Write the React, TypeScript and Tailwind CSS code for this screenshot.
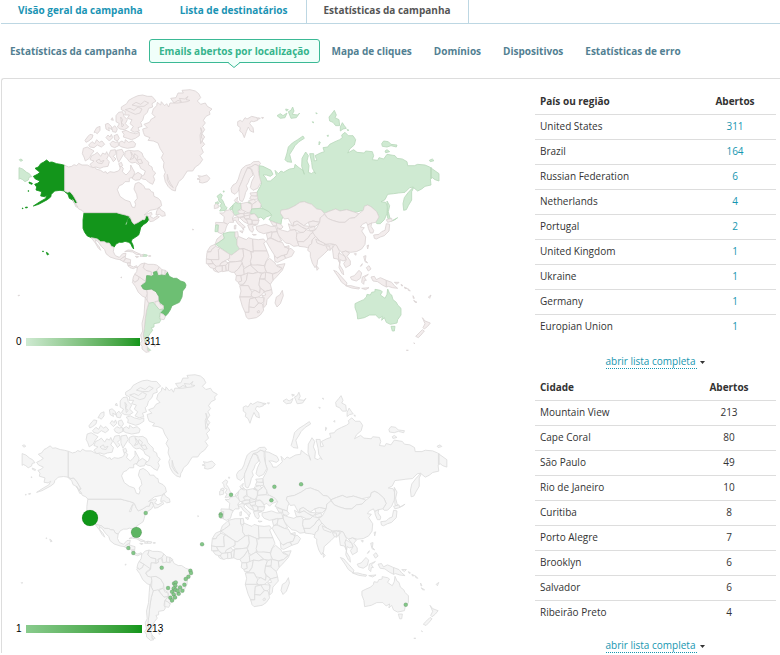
import React from 'react'
import clsx from 'clsx'

type Region = { id: string; points: string[] }
type Row = { name: string; opened: number }

// map units: 3 per pixel, eastern half is shifted by 555
const west: Region[] = [
  {
    id: 'RU-W',
    points: [
      '27,248 38,252 50,262 58,266 65,275 57,277 55,285 45,290 38,284 30,280 27,283',
      '28,224 33,222 38,226 32,229',
    ],
  },
  {
    id: 'US',
    points: [
      '164,241 152,238 140,236 126,231 118,232 110,225 100,232 92,236 85,246 75,250 82,256 90,262 82,268 70,274 76,282 90,288 84,294 74,298 80,306 78,315 95,320 92,333 104,335 112,330 106,341 90,350 70,363 86,358 112,344 122,336 124,328 134,318 150,316 164,318 172,322 180,320 190,332 196,342 202,353 194,354 186,344 178,340 174,328 164,320',
      '57,291 67,295 66,298 58,295',
      '54,317 56,317 56,319 54,319',
      '37,369 39,369 39,371 37,371',
      '46,367 52,366 52,368 47,369',
      '222,383 320,383 330,386 346,390 358,394 352,404 345,420 350,420 354,402 361,398 366,410 372,418 385,412 397,404 404,404 408,392 414,393 417,402 411,412 400,419 392,428 389,441 386,450 376,457 366,463 364,470 369,480 371,492 367,487 362,476 356,472 345,469 338,472 328,472 318,477 312,487 304,484 298,474 290,474 283,470 272,470 262,462 244,458 232,453 224,442 219,430 219,405',
      '109,502 112,503 116,508 112,510',
      '98,498 100,498 100,500 98,500',
    ],
  },
  {
    id: 'CA',
    points: [
      '164,241 176,246 185,244 192,239 200,242 206,235 216,240 232,240 243,246 254,246 258,252 272,256 280,262 288,260 291,266 300,260 312,262 325,258 330,252 330,240 340,250 337,260 348,270 356,262 362,254 362,240 374,262 370,276 358,280 358,290 345,290 338,298 328,302 322,314 330,334 345,345 360,350 366,366 374,368 377,358 374,350 382,340 380,328 372,312 376,296 386,292 396,298 402,304 406,312 418,312 424,320 430,322 432,334 445,340 452,348 455,362 440,372 420,376 402,390 412,386 424,382 426,388 420,394 430,400 444,392 448,396 430,408 420,410 414,393 408,392 404,404 397,404 385,412 372,418 366,410 361,398 358,394 346,390 330,386 320,383 222,383 216,376 206,372 196,356 202,353 190,332 180,320 172,322 164,318',
      '440,378 448,366 452,374 464,382 466,392 456,394 448,388 438,390',
      '345,200 356,196 372,198 385,197 396,204 400,216 408,224 416,232 416,240 426,246 428,256 437,264 430,274 434,284 428,298 416,292 408,284 398,282 390,276 402,270 406,258 392,250 388,240 376,232 366,234 358,230 352,222 344,214',
      '362,200 366,214 360,224 370,220 374,206 384,214 380,226 392,222 398,234 388,236',
      '220,190 232,186 242,192 252,198 244,208 238,220 226,228 222,216 217,206',
      '245,212 254,208 262,202 272,214 278,204 286,208 290,200 295,212 290,222 298,230 294,244 280,246 270,250 258,246 248,248 240,238 252,228 240,224',
      '258,228 268,222 272,230 282,226 276,236 264,234',
      '302,196 316,194 318,206 310,214 318,222 310,230 304,220 296,210',
      '320,196 336,193 342,206 332,222 326,232 320,216',
      '326,236 334,232 338,242 330,246',
      '372,270 384,262 396,270 390,284 376,286 366,280',
      '334,74 334,66 350,56 356,46 370,38 384,32 398,30 412,34 426,34 438,48 426,56 428,66 416,70 412,82 402,92 398,106 392,112 396,124 384,128 388,138 374,142 362,136 370,124 360,116 366,104 352,100 358,90 344,90 346,80',
      '346,74 360,70 372,76 384,66 396,72 390,84 376,88 362,82',
      '366,60 378,52 392,58 404,48 416,54 402,64 384,64',
      '318,92 326,82 338,80 342,94 352,104 346,116 356,126 344,134 330,132 322,126 328,116 318,110',
      '332,96 338,104 334,114 342,120 336,126',
      '336,140 348,136 360,142 376,146 388,142 388,152 376,160 364,164 352,160 340,156 342,148',
      '328,172 336,168 344,174 346,164 356,172 368,168 377,176 374,186 352,190 336,186 328,182',
      '225,166 234,154 240,148 249,150 246,160 236,168 228,172',
      '236,180 246,170 254,176 260,164 268,172 276,168 284,178 274,186 262,180 252,188 240,186',
      '252,142 260,128 270,124 270,136 262,146 256,142',
      '286,118 294,115 304,124 306,134 296,128 298,138 288,132',
      '288,158 294,150 300,156 304,148 308,158 298,168',
      '306,130 314,122 322,132 318,142 308,140',
      '300,176 308,168 316,172 324,170 326,182 314,188 304,184',
      '312,152 322,148 328,160 322,168 314,164',
      '303,104 307,98 310,106',
      '188,344 194,354 204,366 198,366',
    ],
  },
  {
    id: 'GL',
    points: [
      '398,132 412,128 402,118 418,112 424,102 436,96 426,86 430,72 440,62 442,52 452,60 454,50 464,62 470,56 476,66 480,54 492,54 482,40 498,38 504,24 520,24 516,16 540,14 556,18 566,26 572,38 562,48 572,58 586,54 592,64 606,72 598,80 600,88 588,94 580,106 586,114 578,124 584,134 576,146 584,156 576,168 584,178 574,188 580,202 570,212 578,224 568,238 556,246 548,258 532,258 524,270 518,280 506,290 502,300 498,306 496,318 484,314 474,304 466,290 462,272 466,262 460,246 462,232 454,218 460,206 450,190 444,174 430,168 414,166 420,158 404,152 400,142',
      '492,54 504,46 514,50 508,40 524,42 534,34 528,44 540,46 532,50 516,52 504,54',
      '570,150 574,140 572,128 576,140 574,156 578,164 572,176',
      '472,268 476,284 482,296 490,308 480,300 472,286',
    ],
  },
  { id: 'IS', points: ['561,282 570,278 564,272 576,274 590,270 600,280 592,290 578,294 568,292 570,284'] },
  {
    id: 'MX',
    points: [
      '244,458 262,462 272,470 283,470 290,474 298,474 304,484 312,487 310,500 316,512 328,517 338,506 348,505 346,514 338,518 336,524 330,524 318,522 300,516 288,506 284,494 274,484 264,470 256,464 258,474 268,486 272,496 264,488 256,474 248,464',
    ],
  },
  {
    id: 'CAM',
    points: [
      '330,524 338,518 346,514 346,522 340,530',
      '340,530 348,520 362,524 361,534 352,534',
      '352,534 361,534 360,543 354,542',
      '354,542 360,541 370,546 380,542 384,550 378,547 370,551 360,548',
    ],
  },
  { id: 'CU', points: ['344,500 354,495 366,496 378,502 392,508 380,509 368,501 354,499', '376,514 386,515 380,518'] },
  { id: 'DO', points: ['400,508 412,510 410,514 398,514'] },
  { id: 'HT', points: ['392,510 400,508 398,514 390,514', '416,512 422,512 422,514 416,514'] },
  { id: 'CO', points: ['382,548 392,537 404,534 400,548 408,556 424,560 424,572 410,572 408,590 395,584 388,576 374,568 380,560'] },
  { id: 'VE', points: ['404,534 414,538 430,538 440,540 448,546 442,556 430,562 432,570 424,574 424,560 408,556 400,548'] },
  { id: 'GY', points: ['448,546 456,554 455,570 445,572 442,556', '456,554 466,556 465,571 455,570', '466,556 474,562 470,571 465,571'] },
  { id: 'EC', points: ['374,568 388,576 384,586 374,592 368,586 370,576'] },
  { id: 'PE', points: ['388,576 408,590 396,598 394,604 400,612 410,612 412,625 408,638 398,634 385,622 376,604 367,592 370,586 374,592 384,586'] },
  { id: 'BO', points: ['410,612 424,612 438,620 447,635 445,648 434,650 430,654 416,655 411,645 412,625'] },
  {
    id: 'BR',
    points: [
      '410,572 416,572 424,574 432,570 430,562 440,559 444,572 455,570 466,572 472,562 478,574 490,580 500,580 512,588 524,592 528,600 526,608 518,618 516,636 508,652 495,658 486,662 480,676 472,688 466,693 460,688 450,684 462,672 460,660 448,652 447,635 438,620 424,612 408,614 400,612 394,602 408,592',
    ],
  },
  { id: 'PY', points: ['434,652 445,648 448,652 450,658 460,662 460,672 448,674 436,660'] },
  { id: 'UY', points: ['450,684 460,688 466,695 462,704 450,702'] },
  { id: 'AR', points: ['416,655 430,652 436,660 448,674 460,672 450,684 448,698 452,706 448,713 432,716 432,726 424,728 428,736 420,746 414,756 416,764 410,772 404,770 400,750 403,730 406,700 410,675', '412,786 422,796 412,796'] },
  { id: 'CL', points: ['406,636 412,648 416,655 410,675 406,700 403,730 400,750 404,770 412,784 412,796 418,800 408,802 396,792 396,784 390,776 396,768 392,750 398,738 396,715 402,690 404,660'] },
  { id: 'FK', points: ['432,780 438,782 434,785', '333,576 336,577 333,579', '24,631 29,631 26,633', '548,432 551,434 548,435'] },
]

const east: Region[] = [
  {
    id: 'SJ',
    points: [
      '128,110 136,106 142,110 150,98 156,102 170,94 186,98 188,106 176,110 168,108 164,116 174,128 176,142 166,138 160,126 154,140 148,158 142,144 134,138 136,128 128,122',
      '188,98 196,100 190,103',
      '200,97 206,98 202,101',
    ],
  },
  {
    id: 'RU',
    points: [
      '192,242 204,244 216,250 228,256 234,268 226,274 214,270 204,270 212,278 216,288 226,288 236,280 244,272 240,256 250,266 258,258 266,262 276,256 284,252 298,250 300,238 312,248 324,256 328,268 320,244 321,220 332,201 340,212 336,228 342,242 340,262 350,266 356,260 362,266 352,250 350,232 344,206 356,206 358,228 366,226 360,212 376,204 388,200 384,188 398,186 404,178 420,170 434,164 442,158 440,150 450,142 460,152 474,152 482,164 478,180 464,192 458,204 476,194 486,202 508,204 512,198 532,200 536,212 532,224 548,226 552,218 566,222 576,208 600,212 606,220 622,222 636,230 638,242 658,242 668,238 690,240 704,246 732,266 732,288 720,284 712,278 706,282 708,300 690,304 680,312 668,318 656,308 650,320 650,345 640,362 634,374 626,376 624,356 628,338 640,322 655,306 644,308 630,322 610,324 596,326 578,328 570,344 558,350 572,352 578,364 576,386 568,404 556,416 546,416 542,412 552,396 545,380 528,365 518,360 508,364 505,376 480,382 455,374 435,378 422,372 405,378 388,385 378,374 365,372 350,358 340,355 328,350 315,352 300,362 280,372 258,376 256,384 264,396 260,404 258,418 240,412 222,404 230,392 218,378 202,370 196,356 188,340 186,322 196,304 200,294 194,280',
      '270,224 276,204 280,186 292,174 308,164 324,153 328,160 312,170 300,182 292,196 284,208 290,232 276,230',
      '246,92 256,86 264,92 276,84 270,98 256,100',
      '280,80 288,76 293,66 297,78 292,88 308,90 314,84 304,98 288,100',
      '272,72 280,74 274,78',
      '402,96 412,84 418,76 424,90 420,98 432,104 434,122 422,122 414,112 404,108',
      '436,126 442,113 448,122 454,130 444,132 436,138',
      '456,134 460,134 460,138',
      '560,176 566,168 580,170 588,178 606,180 604,186 588,182 576,186 562,184',
      '570,198 576,194 584,200 572,203',
      '703,226 712,222 717,227 706,230',
      '576,348 584,362 580,380 584,396 588,404 578,400',
      '590,408 608,398 600,404',
      '158,352 168,350 168,357',
      '372,170 376,172 372,180',
      '396,152 400,150 399,155',
      '362,84 366,84 366,87',
      '352,110 357,112 354,114',
      '707,248 709,248 709,280 707,280',
    ],
  },
  { id: 'NO', points: ['110,322 108,310 114,300 124,294 130,282 134,268 140,252 152,242 166,238 176,230 192,229 197,236 190,242 180,238 168,246 158,248 150,265 140,290 132,310 130,318 120,328'] },
  { id: 'SE', points: ['132,326 132,308 140,290 150,265 158,248 168,252 174,270 164,280 160,292 154,302 158,312 152,322 148,338 142,350 134,346'] },
  { id: 'FI', points: ['158,248 168,246 180,238 190,242 190,256 192,270 198,292 188,310 174,316 166,308 170,290 178,274 170,252'] },
  { id: 'DK', points: ['118,346 128,336 126,346 132,352 122,352'] },
  { id: 'GB', points: ['70,340 66,334 76,326 82,330 78,340 84,348 90,362 96,368 92,376 74,378 80,368 74,364 80,354 72,350', '84,318 88,318 86,322', '60,354 68,350 72,356 66,358'] },
  { id: 'IE', points: ['58,360 64,356 70,360 70,368 58,371'] },
  { id: 'NL', points: ['104,370 114,360 112,372 106,375'] },
  { id: 'DE', points: ['115,358 122,352 130,356 137,354 139,370 130,376 136,386 122,391 116,388 112,372'] },
  { id: 'FR', points: ['74,384 86,384 90,378 104,374 112,380 118,390 112,398 116,412 104,412 98,418 86,412 88,395'] },
  { id: 'ES', points: ['62,412 86,413 98,418 94,426 90,440 78,446 69,442 70,420 62,419'] },
  { id: 'PT', points: ['62,420 70,420 68,440 60,440'] },
  { id: 'IT', points: ['113,400 124,396 132,398 130,406 140,416 151,426 146,428 146,436 140,426 128,416 122,406 114,406', '134,438 144,438 142,444', '118,422 123,420 122,432 118,432'] },
  { id: 'PL', points: ['138,356 156,352 170,358 170,374 162,384 150,380 140,376'] },
  { id: 'LT', points: ['165,324 186,322 186,333 170,334', '164,342 168,332 188,334 188,342 176,344', '160,348 176,343 184,350 172,358'] },
  { id: 'BY', points: ['172,358 184,350 188,344 198,358 196,370 170,372'] },
  { id: 'UA', points: ['166,386 170,372 196,370 206,372 222,380 230,390 214,396 206,404 198,396 188,400 186,392 178,386'] },
  { id: 'CZ', points: ['128,378 140,374 152,380 144,386 134,386', '122,391 136,386 148,386 146,394 132,397', '146,386 164,384 166,390 150,394'] },
  { id: 'RO', points: ['164,390 178,386 188,398 192,406 172,406 164,400'] },
  { id: 'HU', points: ['146,394 164,390 164,400 150,402'] },
  { id: 'RS', points: ['134,398 148,396 150,402 160,410 158,416 146,410', '154,402 170,404 172,416 160,418'] },
  { id: 'BG', points: ['172,406 192,406 188,418 172,418'] },
  { id: 'GR', points: ['158,420 172,418 184,420 172,424 176,434 172,442 164,436', '172,448 184,449 176,451'] },
  { id: 'TR', points: ['184,424 196,422 212,418 228,424 242,424 246,440 222,442 206,446 190,440 184,432'] },
  { id: 'GE', points: ['226,408 244,414 246,422 234,422', '244,414 258,418 264,426 258,432 246,428'] },
  { id: 'KZ', points: ['258,376 280,372 300,362 315,352 328,350 340,355 350,358 365,372 378,374 388,385 386,396 376,398 374,412 354,408 340,412 326,422 306,408 296,412 294,424 286,412 280,400 268,402 264,396 256,384'] },
  { id: 'UZ', points: ['296,412 306,408 326,422 344,424 340,430 334,432 320,426 308,418 296,424'] },
  { id: 'TM', points: ['280,416 294,424 308,418 320,426 334,434 326,442 316,442 300,434 286,436'] },
  { id: 'KG', points: ['340,412 354,408 374,412 362,424 344,424', '340,430 358,424 362,434 346,438'] },
  { id: 'IR', points: ['246,430 262,436 278,440 286,436 300,434 306,444 304,460 312,482 296,484 284,476 272,474 260,462 248,448'] },
  { id: 'AF', points: ['306,444 326,442 334,434 346,438 358,438 346,448 340,458 326,470 308,470 304,458'] },
  { id: 'PK', points: ['308,470 326,470 340,458 346,448 358,440 362,454 352,464 350,476 342,482 344,490 330,486 312,484'] },
  { id: 'MN', points: ['388,385 405,378 422,372 435,378 455,374 480,382 492,386 480,398 464,400 450,412 432,412 412,406 398,400'] },
  { id: 'CN', points: ['388,388 398,400 412,406 432,412 450,412 464,400 480,398 492,386 505,376 508,364 518,360 528,365 545,380 552,396 542,412 530,414 518,420 514,412 502,418 496,426 508,428 500,438 512,456 510,478 500,492 484,500 466,502 452,498 440,502 430,492 424,480 408,476 390,478 374,468 362,456 352,440 362,434 374,412 376,398', '478,506 484,506 482,511'] },
  { id: 'KR', points: ['518,420 530,414 528,424 536,436 534,444 526,444 520,430'] },
  { id: 'JP', points: ['536,450 552,448 560,440 570,436 574,416 584,418 582,438 568,452 556,456 544,462 538,460', '574,404 590,400 592,408 578,412', '516,482 521,480 518,492'] },
  { id: 'IN', points: ['342,482 350,476 352,464 362,454 374,468 390,478 404,480 416,478 410,492 400,494 388,506 368,524 366,540 360,548 352,534 346,514 346,502 338,496'] },
  { id: 'BD', points: ['392,482 404,484 406,496 398,494'] },
  { id: 'LK', points: ['364,542 371,550 366,556'] },
  { id: 'NP', points: ['362,462 390,476 388,482 366,474'] },
  { id: 'MM', points: ['412,490 420,478 426,484 434,500 430,512 434,534 428,522 416,520'] },
  { id: 'TH', points: ['432,504 440,508 450,514 454,524 444,528 436,524 434,540 444,556 446,570 440,564 432,548 434,534 430,512'] },
  { id: 'VN', points: ['440,502 452,498 464,504 456,514 466,528 466,540 452,548 446,536 454,524 450,514'] },
  { id: 'PH', points: ['506,514 513,512 511,526 518,534 510,530', '514,548 522,542 528,552 520,558', '496,544 502,536 500,542'] },
  { id: 'ID', points: ['416,556 426,560 440,576 456,594 454,602 440,592 430,576', '452,602 468,602 482,606 494,608 492,612 470,609', '466,576 478,572 492,556 500,564 496,580 484,588 470,584', '502,576 520,568 508,578 514,586 508,586 506,598 500,592', '500,610 522,608 512,614', '528,576 538,574 544,584 556,578 574,586 574,606 562,600 548,590 534,588'] },
  { id: 'PG', points: ['574,586 590,592 598,602 608,610 592,608 580,604 574,606', '598,592 612,592 606,598'] },
  { id: 'SB', points: ['618,598 624,602 620,603', '628,606 636,610 630,611', '638,610 646,618 640,616', '654,632 658,640 655,640', '656,646 666,652 660,652', '700,636 708,630 704,640'] },
  { id: 'AU', points: ['480,656 492,650 506,644 514,636 516,628 526,630 530,622 540,620 540,613 556,616 562,620 556,630 570,640 576,628 578,612 584,626 590,630 594,644 604,652 608,660 618,670 618,690 608,704 606,714 586,718 574,712 568,698 560,706 562,694 552,700 542,690 524,690 508,698 488,702 486,684 480,668', '588,724 600,724 598,738 592,738'] },
  { id: 'NZ', points: ['682,698 690,708 706,714 698,724 688,732 684,728 690,716', '662,754 672,744 682,734 688,738 678,750 670,758', '656,774 660,776', '634,796 640,796'] },
  { id: 'IQ', points: ['214,446 230,440 232,454 218,462', '232,442 246,440 252,454 260,468 250,470 228,458'] },
  { id: 'SA', points: ['218,462 228,460 250,470 262,472 268,484 282,492 276,508 260,512 244,520 238,510 228,494 214,470'] },
  { id: 'YE', points: ['238,512 246,520 260,512 268,512 272,520 248,532 240,530'] },
  { id: 'OM', points: ['282,492 288,490 298,500 290,514 272,520 268,510 276,508', '268,486 282,482 282,490'] },
  { id: 'MA', points: ['60,478 66,462 78,452 84,446 90,450 88,460 72,472'] },
  { id: 'EH', points: ['36,500 46,484 60,478 62,484 50,494 48,500'] },
  { id: 'DZ', points: ['62,478 72,472 88,460 84,446 104,441 120,441 120,456 126,466 126,480 134,492 110,510 104,508'] },
  { id: 'TN', points: ['120,441 128,440 130,454 125,460 120,454'] },
  { id: 'LY', points: ['130,454 144,460 154,464 160,458 173,462 175,500 168,500 144,490 134,492 126,480 126,464'] },
  { id: 'EG', points: ['173,462 190,464 206,462 212,470 206,474 216,498 175,498'] },
  { id: 'MR', points: ['36,502 48,500 50,494 62,484 76,490 70,494 72,524 48,524 34,522'] },
  { id: 'ML', points: ['76,490 104,508 104,520 88,528 78,534 74,544 64,544 54,534 48,524 72,524 70,494'] },
  { id: 'NE', points: ['104,508 110,510 134,492 144,492 146,514 138,528 122,530 104,530 98,524 104,520'] },
  { id: 'TD', points: ['144,490 168,500 170,516 166,540 152,548 144,544 140,530 146,514'] },
  { id: 'SD', points: ['175,498 216,498 222,514 214,528 208,542 188,540 172,544 166,530 170,516 168,500 175,502'] },
  { id: 'ET', points: ['214,528 224,520 240,534 246,544 262,550 248,562 232,566 216,562 208,548'] },
  { id: 'SO', points: ['246,540 270,536 262,556 244,576 234,586 232,568 248,562 262,550'] },
  { id: 'SN', points: ['34,522 48,524 54,536 34,536', '38,538 54,536 64,544 62,554 54,550 46,548'] },
  { id: 'LR', points: ['54,552 60,550 70,562 58,558'] },
  { id: 'CI', points: ['64,544 82,542 82,558 70,562 60,552'] },
  { id: 'GH', points: ['82,542 92,540 94,558 82,560'] },
  { id: 'BF', points: ['74,542 78,534 90,528 100,534 92,541'] },
  { id: 'BJ', points: ['92,540 102,532 100,557 94,558'] },
  { id: 'NG', points: ['102,532 122,530 138,528 142,534 130,552 118,562 110,562 100,557'] },
  { id: 'CM', points: ['118,562 130,552 142,534 146,550 148,570 124,572'] },
  { id: 'CF', points: ['146,552 166,540 188,560 174,566 158,564 148,570'] },
  { id: 'SS', points: ['166,540 188,540 208,542 212,558 206,564 190,562'] },
  { id: 'GA', points: ['124,572 138,572 140,588 130,592 122,586'] },
  { id: 'CG', points: ['138,572 158,564 154,586 144,598 132,598 130,592 140,588'] },
  { id: 'CD', points: ['158,564 174,566 190,562 200,566 194,582 192,600 196,612 194,624 180,616 166,614 160,602 136,602 146,598 154,586'] },
  { id: 'UG', points: ['200,566 212,562 212,580 194,582'] },
  { id: 'KE', points: ['212,562 232,566 234,586 226,598 210,586'] },
  { id: 'TZ', points: ['194,582 210,584 226,598 230,614 210,620 196,608 192,600'] },
  { id: 'AO', points: ['134,602 160,602 166,614 172,622 168,636 134,636 138,618'] },
  { id: 'ZM', points: ['172,620 180,616 194,624 196,610 208,618 204,626 188,638 174,638 168,630'] },
  { id: 'MZ', points: ['208,620 230,614 232,626 216,644 214,660 206,668 206,652 208,638 200,632 212,630'] },
  { id: 'ZW', points: ['180,638 190,636 206,638 206,650 198,656 188,652'] },
  { id: 'NA', points: ['134,636 168,636 182,638 164,642 162,664 162,682 150,682 142,664'] },
  { id: 'BW', points: ['164,642 180,638 190,654 178,668 162,666'] },
  { id: 'ZA', points: ['150,682 162,682 162,666 178,668 192,654 202,656 206,676 196,690 184,698 160,702 154,696'] },
  { id: 'LS', points: ['186,680 192,676 194,682 188,684'] },
  { id: 'MG', points: ['262,616 265,632 256,656 246,666 240,654 244,636 254,630'] },
]

const lowRegions = ['RU', 'RU-W', 'NL', 'PT', 'GB', 'UA', 'DE', 'AR', 'DZ', 'AU', 'DO']

const cityDots = [
  [407, 429], [355, 534], [370, 549], [455, 593], [541, 602], [543, 609], [535, 620],
  [527, 627], [523, 644], [474, 654], [492, 640], [497, 637], [496, 647], [491, 655],
  [510, 652], [517, 662], [486, 665], [497, 660], [506, 671], [503, 662], [491, 673],
  [495, 682], [481, 683], [486, 691], [576, 523], [632, 433], [632, 438], [663, 374],
  [793, 350], [873, 343], [784, 391], [1187, 704],
]

const countries: Row[] = [
  { name: 'United States', opened: 311 },
  { name: 'Brazil', opened: 164 },
  { name: 'Russian Federation', opened: 6 },
  { name: 'Netherlands', opened: 4 },
  { name: 'Portugal', opened: 2 },
  { name: 'United Kingdom', opened: 1 },
  { name: 'Ukraine', opened: 1 },
  { name: 'Germany', opened: 1 },
  { name: 'Europian Union', opened: 1 },
]

const cities: Row[] = [
  { name: 'Mountain View', opened: 213 },
  { name: 'Cape Coral', opened: 80 },
  { name: 'São Paulo', opened: 49 },
  { name: 'Rio de Janeiro', opened: 10 },
  { name: 'Curitiba', opened: 8 },
  { name: 'Porto Alegre', opened: 7 },
  { name: 'Brooklyn', opened: 6 },
  { name: 'Salvador', opened: 6 },
  { name: 'Ribeirão Preto', opened: 4 },
]

const subTabs = [
  'Estatísticas da campanha',
  'Emails abertos por localização',
  'Mapa de cliques',
  'Domínios',
  'Dispositivos',
  'Estatísticas de erro',
]

const regionFill = (id: string, byCountry: boolean) => {
  if (!byCountry) return 'fill-[#f5f5f5] stroke-[#dddddd]'
  if (id === 'US') return 'fill-[#13951b] stroke-[#13951b]'
  if (id === 'BR') return 'fill-[#6dbf73] stroke-[#6ab470]'
  if (lowRegions.includes(id)) return 'fill-[#cfead2] stroke-[#b9d8bc]'
  return 'fill-[#f3eded] stroke-[#dbd4d4]'
}

const WorldMap: React.FC<{ byCountry?: boolean; className?: string }> = ({ byCountry = false, className }) => {
  const renderRegion = (region: Region) => (
    <g key={region.id} className={regionFill(region.id, byCountry)}>
      {region.points.map((points) => (
        <polygon key={points} points={points} />
      ))}
    </g>
  )

  return (
    <svg viewBox="0 0 1320 810" className={className} strokeWidth="2.5" strokeLinejoin="round" aria-hidden="true">
      {west.map(renderRegion)}
      <g transform="translate(555 0)">{east.map(renderRegion)}</g>
      {!byCountry && (
        <g transform="scale(0.989) translate(-9 0)" className="stroke-black/20" strokeWidth="1.5">
          {cityDots.map(([x, y], i) => (
            <circle key={i} cx={x} cy={y} r="6" className="fill-[#83c788]" />
          ))}
          <circle cx="379" cy="487" r="16" className="fill-[#5db562]" />
          <circle cx="240" cy="444" r="24" className="fill-[#109618]" />
        </g>
      )}
    </svg>
  )
}

const Legend: React.FC<{ min: number; max: number; className: string; barClass: string }> = ({
  min,
  max,
  className,
  barClass,
}) => (
  <div
    className={clsx(
      'absolute flex items-center font-["Liberation_Sans",Arial,sans-serif] text-[10px] leading-3 text-black',
      className
    )}
  >
    <span>{min}</span>
    <span className={clsx('mr-[5px] ml-1 h-2 bg-linear-to-r to-[#109618]', barClass)} />
    <span>{max}</span>
  </div>
)

const StatsTable: React.FC<{ title: string; rows: Row[]; linked?: boolean }> = ({ title, rows, linked }) => (
  <div>
    <table className="w-full border-collapse text-left">
      <thead>
        <tr className="h-[25px] border-b border-[#dddddd]">
          <th className="px-[5px] py-0 font-bold">{title}</th>
          <th className={clsx('py-0 text-center font-bold', linked ? 'w-[82px]' : 'w-[94px]')}>Abertos</th>
        </tr>
      </thead>
      <tbody>
        {rows.map((row) => (
          <tr key={row.name} className="h-[25px] border-b border-[#dddddd] last:border-b-0">
            <td className="px-[5px] pt-0 pb-0.5">{row.name}</td>
            <td className="pt-0 pb-0.5 text-center">
              {linked ? (
                <a href="#" className="text-[#1696b0]">
                  {row.opened}
                </a>
              ) : (
                row.opened
              )}
            </td>
          </tr>
        ))}
      </tbody>
    </table>
    <div className={clsx('flex items-center justify-center gap-[3px]', linked ? 'mt-4' : 'mt-3.5')}>
      <a href="#" className="border-b border-dotted border-[#1696b0] pr-0.5 leading-[13px] text-[#1696b0]">
        abrir lista completa
      </a>
      <svg viewBox="0 0 5 3" className="h-[3px] w-[5px] fill-[#333333]" aria-hidden="true">
        <path d="M0 0h5L2.500 3z" />
      </svg>
    </div>
  </div>
)

const App: React.FC = () => {
  return (
    <div className="overflow-x-hidden bg-white pl-px font-['Open_Sans',sans-serif] text-[10px] leading-4 text-[#333333]">
      <nav className="flex h-6 border-b border-[#bdd7e3] text-[10px] font-bold">
        <a href="#" className="px-[17px] pt-0.5 text-[#1a94b4]">
          Visão geral da campanha
        </a>
        <a href="#" className="pt-0.5 pr-[18px] pl-5 text-[#1a94b4]">
          Lista de destinatários
        </a>
        <a href="#" className="border-x border-[#bdd7e3] px-[17px] pt-0.5 text-[#555555]">
          Estatísticas da campanha
        </a>
      </nav>

      <nav className="-ml-px flex items-center gap-0.5 pt-[15px] font-bold">
        {subTabs.map((tab, i) => (
          <a
            key={tab}
            href="#"
            className={clsx(
              'relative flex h-6 items-center rounded-[3px] border px-[9px]',
              i === 1 ? 'border-[#3bb995] bg-[#f0fffa] text-[#35b48c]' : 'border-transparent text-[#527f92]'
            )}
          >
            {tab}
            {i === 1 && (
              <svg viewBox="0 0 12 6" className="absolute top-[22px] left-1/2 h-1.5 w-3 -translate-x-1/2" aria-hidden="true">
                <path d="M0 0.500L6 5.500L12 0.500" fill="#f0fffa" stroke="#3bb995" />
                <path d="M1 0H11" stroke="#f0fffa" strokeWidth="2" />
              </svg>
            )}
          </a>
        ))}
      </nav>

      <main className="-mr-2 mt-[15px] flex rounded-tl-[3px] border-t border-l border-[#dddddd] pr-3">
        <section className="flex min-w-0 flex-1 flex-col gap-[15px] pt-1.5 pl-2">
          <div className="relative">
            <WorldMap byCountry className="w-full max-w-[440px]" />
            <Legend min={0} max={311} className="bottom-[7px] left-1.5" barClass="w-[114px] from-[#cfead2]" />
          </div>
          <div className="relative">
            <WorldMap className="ml-[3px] w-full max-w-[445px]" />
            <Legend min={1} max={213} className="bottom-2 left-1.5" barClass="w-[116px] from-[#89cb8d]" />
          </div>
        </section>
        <section className="flex w-[241px] shrink-0 flex-col gap-1.5 pt-2.5">
          <StatsTable title="País ou região" rows={countries} linked />
          <StatsTable title="Cidade" rows={cities} />
        </section>
      </main>
    </div>
  )
}

export default App
